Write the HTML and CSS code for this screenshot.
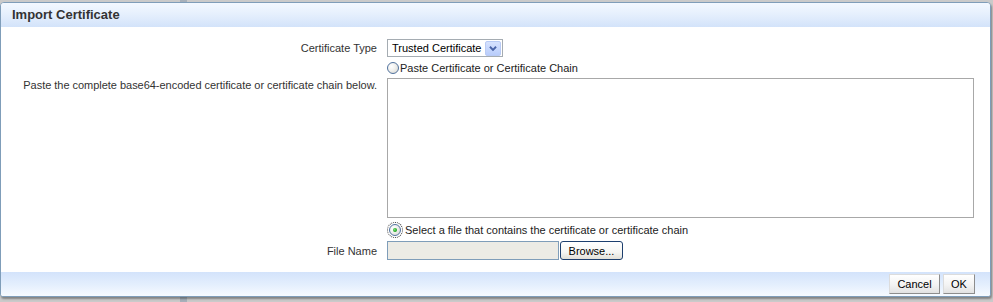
FILE: index.html
```html
<!DOCTYPE html>
<html>
<head>
<meta charset="utf-8">
<title>Import Certificate</title>
<link rel="stylesheet" href="styles.css">
</head>
<body>
<div class="dialog">
  <div class="dialog-header">Import Certificate</div>
  <div class="dialog-body">
    <div class="form">
      <div class="label">Certificate Type</div>
      <div class="field">
        <div class="select">
          <span class="select-text">Trusted Certificate</span>
          <span class="select-btn"><svg width="16" height="15" viewBox="0 0 16 15"><path d="M4.5 5.5 L8 9 L11.5 5.5" fill="none" stroke="#4a64a8" stroke-width="2.2"/></svg></span>
        </div>
      </div>

      <div class="label"></div>
      <div class="field">
        <span class="radio"></span><span class="radio-text">Paste Certificate or Certificate Chain</span>
      </div>

      <div class="label label-top">Paste the complete base64-encoded certificate or certificate chain below.</div>
      <div class="field field-top"><div class="textarea"></div></div>

      <div class="label"></div>
      <div class="field">
        <span class="radio radio-checked"></span><span class="radio-text">Select a file that contains the certificate or certificate chain</span>
      </div>

      <div class="label">File Name</div>
      <div class="field">
        <div class="file-input"></div>
        <div class="browse-btn">Browse...</div>
      </div>
    </div>
  </div>
  <div class="dialog-footer">
    <div class="footer-btn btn-cancel">Cancel</div>
    <div class="footer-btn btn-ok">OK</div>
  </div>
</div>
</body>
</html>
```

FILE: styles.css
```css
html, body {
  margin: 0;
  padding: 0;
}

body {
  width: 993px;
  height: 302px;
  overflow: hidden;
  font-family: "Liberation Sans", Arial, sans-serif;
  font-size: 11px;
  color: #333;
  background: linear-gradient(to right, #cacaca 0, #cacaca 180px, #a7b0ba 180px, #a7b0ba 187px, #cacaca 187px);
}

.dialog {
  margin-top: 2px;
  width: 991px;
  height: 295px;
  box-sizing: border-box;
  border: 1px solid #7f9db9;
  border-radius: 4px 4px 3px 3px;
  background: #fff;
  box-shadow: 1px 2px 2px rgba(0, 0, 0, 0.35);
  display: flex;
  flex-direction: column;
  overflow: hidden;
}

.dialog-header {
  height: 24px;
  flex: none;
  box-sizing: border-box;
  padding-left: 11px;
  line-height: 24px;
  font-size: 13px;
  font-weight: bold;
  color: #333;
  background: linear-gradient(to bottom, #f3f8ff 0%, #e6f0fd 45%, #d3e3fa 100%);
}

.dialog-body {
  flex: 1;
  padding: 12px 16px 0 0;
}

.form {
  display: grid;
  grid-template-columns: 376px 1fr;
  grid-template-rows: 18px 21px 140px 23px 19px;
  column-gap: 10px;
}

.label {
  display: flex;
  align-items: center;
  justify-content: flex-end;
  text-align: right;
  color: #333;
}

.label-top {
  align-items: flex-start;
  padding-top: 1px;
  letter-spacing: -0.03px;
}

.field {
  display: flex;
  align-items: center;
  color: #222;
}

.field-top {
  align-items: stretch;
}

.select {
  width: 116px;
  height: 18px;
  box-sizing: border-box;
  border: 1px solid #a5acb2;
  display: flex;
  align-items: center;
  justify-content: space-between;
  padding: 0 1px 0 4px;
  color: #000;
  background: #fff;
}

.select-btn {
  width: 16px;
  height: 15px;
  box-sizing: border-box;
  border: 1px solid #b9cbf5;
  border-radius: 2px;
  background: linear-gradient(to bottom, #d6e2fe, #b9cdfb);
  display: flex;
  align-items: center;
  justify-content: center;
}

.select-btn svg {
  display: block;
}

.radio {
  width: 12px;
  height: 12px;
  flex: none;
  box-sizing: border-box;
  border: 1px solid #51729e;
  border-radius: 50%;
  background: radial-gradient(circle at 35% 35%, #ffffff 0%, #f2f2f0 40%, #d2d2cc 100%);
  margin-right: 1px;
  position: relative;
}

.radio-checked {
  margin-left: 2px;
  margin-right: 4px;
  outline: 1px dotted #333;
  outline-offset: 1px;
}

.radio-checked::after {
  content: "";
  position: absolute;
  left: 3px;
  top: 3px;
  width: 4px;
  height: 4px;
  border-radius: 50%;
  background: radial-gradient(circle at 40% 40%, #7fe07f 0%, #22a822 60%, #168a16 100%);
}

.radio-text {
  white-space: nowrap;
  color: #222;
}

.textarea {
  flex: 1;
  box-sizing: border-box;
  border: 1px solid #a8a8a8;
  background: #fff;
}

.file-input {
  width: 172px;
  height: 19px;
  box-sizing: border-box;
  border: 1px solid #7f9db9;
  background: #ecebe5;
}

.browse-btn {
  width: 63px;
  height: 19px;
  box-sizing: border-box;
  margin-left: 1px;
  border: 1px solid #1d3f6e;
  border-radius: 3px;
  background: linear-gradient(to bottom, #ffffff 0%, #f6f6f3 60%, #e2e0d8 100%);
  display: flex;
  align-items: center;
  justify-content: center;
  color: #000;
}

.dialog-footer {
  height: 24px;
  flex: none;
  box-sizing: border-box;
  padding-right: 15px;
  display: flex;
  align-items: center;
  justify-content: flex-end;
  gap: 3px;
  background: linear-gradient(to bottom, #d3e3fb 0%, #e3eefd 50%, #f6faff 100%);
}

.footer-btn {
  height: 20px;
  box-sizing: border-box;
  border: 1px solid #8d8d8d;
  border-top-color: #dcdcdc;
  border-left-color: #dcdcdc;
  background: linear-gradient(to bottom, #ffffff 0%, #f3f3f3 55%, #e2e2e2 100%);
  display: flex;
  align-items: center;
  justify-content: center;
  color: #000;
}

.btn-cancel {
  width: 51px;
}

.btn-ok {
  width: 32px;
}
```
